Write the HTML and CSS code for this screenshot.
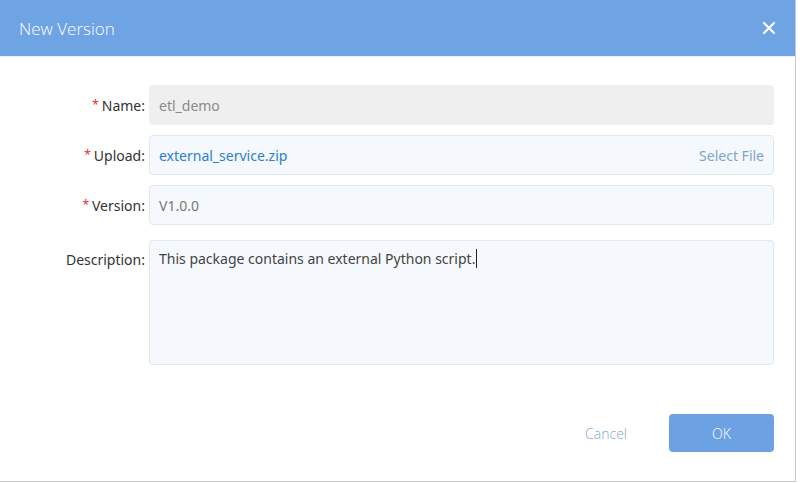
FILE: index.html
```html
<!DOCTYPE html>
<html>
<head>
<meta charset="utf-8">
<link rel="stylesheet" href="styles.css">
</head>
<body>
<div class="dialog">
  <div class="header">
    <div class="title">New Version</div>
    <svg class="close" width="14" height="14" viewBox="0 0 14 14"><path d="M2 2L12 12M12 2L2 12" stroke="#fff" stroke-width="2.2" stroke-linecap="round"/></svg>
  </div>
  <div class="body">
    <div class="row">
      <div class="label"><span class="req">*</span>Name:</div>
      <div class="field disabled">etl_demo</div>
    </div>
    <div class="row">
      <div class="label"><span class="req">*</span>Upload:</div>
      <div class="field upload"><span class="file">external_service.zip</span><span class="select">Select File</span></div>
    </div>
    <div class="row">
      <div class="label"><span class="req">*</span>Version:</div>
      <div class="field muted">V1.0.0</div>
    </div>
    <div class="row desc-row">
      <div class="label">Description:</div>
      <div class="field textarea">This package contains an external Python script.<span class="caret"></span></div>
    </div>
  </div>
  <div class="footer">
    <span class="cancel">Cancel</span>
    <span class="ok">OK</span>
  </div>
</div>
</body>
</html>
```

FILE: styles.css
```css
html, body {
  margin: 0;
  padding: 0;
  background: #fff;
}
body {
  width: 800px;
  height: 483px;
  font-family: "Noto Sans", "Open Sans", sans-serif;
  font-size: 14px;
  overflow: hidden;
}
.dialog {
  width: 795px;
  height: 481px;
  border-right: 1px solid #c8c8c8;
  border-bottom: 1px solid #c8c8c8;
  background: #fff;
  display: flex;
  flex-direction: column;
}
.header {
  height: 56px;
  background: #6ea3e4;
  display: flex;
  align-items: center;
  justify-content: space-between;
  padding: 0 19px;
  border-bottom: 1px solid #e6eef8;
}
.title {
  color: #fff;
  font-size: 17px;
  font-weight: 300;
  font-family: "Open Sans", "Noto Sans", sans-serif;
}
.body {
  padding: 28px 21px 0 0;
  display: flex;
  flex-direction: column;
  gap: 10px;
}
.row {
  display: flex;
  align-items: center;
}
.label {
  flex: none;
  width: 149px;
  text-align: right;
  color: #333;
  padding-right: 4px;
  box-sizing: border-box;
}
.req {
  color: #e0303a;
  font-size: 12px;
  margin-right: 3px;
  vertical-align: 2px;
}
.field {
  flex: 1;
  height: 40px;
  box-sizing: border-box;
  border-radius: 4px;
  border: 1px solid #dfe7ef;
  background: #f5f9fd;
  padding: 0 9px;
  display: flex;
  align-items: center;
  color: #777;
}
.field.disabled {
  background: #efefef;
  border-color: #efefef;
  color: #8a8a8a;
}
.upload {
  justify-content: space-between;
}
.file {
  color: #2a7fcc;
}
.select {
  color: #7fa5cc;
}
.desc-row {
  align-items: flex-start;
  margin-top: 5px;
}
.desc-row .label {
  padding-top: 10px;
}
.textarea {
  height: 125px;
  align-items: flex-start;
  padding-top: 8px;
  color: #444;
}
.caret {
  display: inline-block;
  width: 1px;
  height: 19px;
  background: #222;
  margin-left: 1px;
}
.footer {
  margin-top: auto;
  display: flex;
  justify-content: flex-end;
  align-items: center;
  padding: 0 21px 29px 0;
  gap: 42px;
}
.cancel {
  color: #7fa5cc;
  font-family: "Open Sans", "Noto Sans", sans-serif;
  font-weight: 300;
}
.ok {
  width: 105px;
  height: 38px;
  border-radius: 4px;
  background: #6ca2e4;
  color: #fff;
  display: flex;
  align-items: center;
  justify-content: center;
  font-family: "Open Sans", "Noto Sans", sans-serif;
  font-weight: 300;
}
```
